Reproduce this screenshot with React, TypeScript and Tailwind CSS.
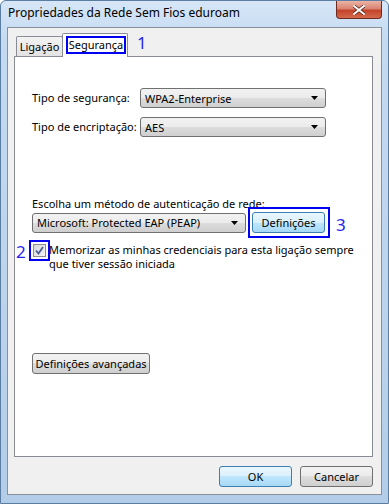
import React from 'react';

const font = { fontFamily: '"Noto Sans", "Segoe UI", sans-serif' };

function Combo({ value, className = '' }: { value: string; className?: string }) {
  return (
    <div
      className={`flex h-[20px] items-center justify-between rounded-[3px] border border-[#707070] bg-[linear-gradient(to_bottom,#f2f2f2_0%,#ebebeb_50%,#dddddd_50%,#cfcfcf_100%)] pl-[4px] pr-[7px] ${className}`}
    >
      <span className="whitespace-nowrap leading-none">{value}</span>
      <svg width="7" height="4" viewBox="0 0 7 4" className="shrink-0">
        <path d="M0 0h7L3.5 4z" fill="#000" />
      </svg>
    </div>
  );
}

function Button({
  label,
  blue = false,
  className = '',
}: {
  label: string;
  blue?: boolean;
  className?: string;
}) {
  return (
    <button
      className={`flex h-[21px] items-center justify-center whitespace-nowrap rounded-[3px] border leading-none text-black ${
        blue
          ? 'border-[#3c7fb1] bg-[linear-gradient(to_bottom,#eaf6fd_0%,#d9f0fc_50%,#bee6fd_50%,#a7d9f5_100%)]'
          : 'border-[#707070] bg-[linear-gradient(to_bottom,#f2f2f2_0%,#ebebeb_50%,#dddddd_50%,#cfcfcf_100%)]'
      } ${className}`}
    >
      {label}
    </button>
  );
}

export default function App() {
  return (
    <div
      style={font}
      className="flex h-[504px] w-[389px] flex-col overflow-hidden rounded-t-[6px] border border-[#5a7ea3] bg-[linear-gradient(to_bottom,#d6e6f7_0%,#c4daf1_8%,#bcd3ec_60%,#b3cde8_100%)] text-[11px] text-black"
    >
      {/* title bar */}
      <div className="flex h-[26px] shrink-0 items-start justify-between pl-[7px] pr-[6px]">
        <span className="mt-[5px] whitespace-nowrap text-[12px] leading-[14px]">
          Propriedades da Rede Sem Fios eduroam
        </span>
        <div className="flex h-[18px] w-[46px] items-center justify-center rounded-b-[4px] border border-t-0 border-[#6e2a1e] bg-[linear-gradient(to_bottom,#eab3a4_0%,#d98472_45%,#c4432a_55%,#d46a4c_100%)]">
          <svg width="12" height="10" viewBox="0 0 12 10">
            <path
              d="M1 1L11 9M11 1L1 9"
              stroke="#5a2218"
              strokeWidth="3.4"
              strokeLinecap="square"
            />
            <path d="M1 1L11 9M11 1L1 9" stroke="#fff" strokeWidth="2" strokeLinecap="square" />
          </svg>
        </div>
      </div>

      {/* client area */}
      <div className="mx-[6px] flex h-[468px] shrink-0 flex-col border border-[#8a9098] bg-[#f0f0f0] pl-[6px] pr-[8px]">
        {/* tabs */}
        <div className="flex h-[28px] shrink-0 items-end pl-[2px]">
          <div className="flex h-[20px] w-[47px] items-center justify-center rounded-t-[2px] border border-b-0 border-[#898c95] bg-[linear-gradient(to_bottom,#f3f3f3,#e3e3e3)] leading-none">
            Ligação
          </div>
          <div className="relative z-10 -mb-px -ml-px flex h-[24px] w-[66px] items-center justify-center rounded-t-[2px] border border-b-0 border-[#898c95] bg-white pb-[2px] pl-[2px] leading-none">
            Segurança
            <span className="absolute left-[3px] right-[1px] top-[2px] h-[18px] border-2 border-[#0000f0]" />
          </div>
          <span className="mb-[5px] ml-[9px] text-[17px] leading-none text-[#2525f0]">1</span>
        </div>

        {/* tab page */}
        <div className="flex h-[401px] shrink-0 flex-col border border-[#898c95] bg-white px-[17px] pt-[31px]">
          <div className="flex items-center">
            <span className="w-[108px] whitespace-nowrap">Tipo de segurança:</span>
            <Combo value="WPA2-Enterprise" className="w-[186px]" />
          </div>
          <div className="mt-[9px] flex items-center">
            <span className="w-[108px] whitespace-nowrap">Tipo de encriptação:</span>
            <Combo value="AES" className="w-[186px]" />
          </div>

          <div className="mt-[60px] whitespace-nowrap leading-[14px]">
            Escolha um método de autenticação de rede:
          </div>
          <div className="mt-[1px] flex items-center">
            <Combo value="Microsoft: Protected EAP (PEAP)" className="w-[214px]" />
            <div className="relative ml-[6px]">
              <Button label="Definições" blue className="w-[73px]" />
              <span className="absolute -bottom-[5px] -left-[4px] -right-[5px] -top-[5px] border-2 border-[#0000f0]" />
            </div>
            <span className="ml-[11px] mt-[4px] text-[17px] leading-none text-[#2525f0]">3</span>
          </div>

          <div className="mt-[10px] flex items-start">
            <div className="relative ml-[1px] mt-[1px] shrink-0">
              <div className="flex h-[13px] w-[13px] items-center justify-center border border-[#8e8f8f] bg-[linear-gradient(135deg,#d8d8d8,#f4f4f4)]">
                <svg width="9" height="9" viewBox="0 0 9 9">
                  <path d="M1 4.5L3.5 7.5L8 1" fill="none" stroke="#4a5f97" strokeWidth="1.8" />
                </svg>
              </div>
              <span className="absolute -left-[4px] -top-[4px] h-[21px] w-[21px] border-2 border-[#0000f0]" />
              <span className="absolute -left-[17px] -top-[1px] text-[17px] leading-none text-[#2525f0]">2</span>
            </div>
            <div className="ml-[3px] whitespace-nowrap leading-[14px]">
              Memorizar as minhas credenciais para esta ligação sempre
              <br />
              que tiver sessão iniciada
            </div>
          </div>

          <div className="mt-[82px]">
            <Button label="Definições avançadas" className="w-[118px]" />
          </div>
        </div>

        {/* dialog buttons */}
        <div className="mt-[9px] flex justify-end gap-[8px]">
          <Button label="OK" blue className="w-[73px]" />
          <Button label="Cancelar" className="w-[73px]" />
        </div>
      </div>
    </div>
  );
}
